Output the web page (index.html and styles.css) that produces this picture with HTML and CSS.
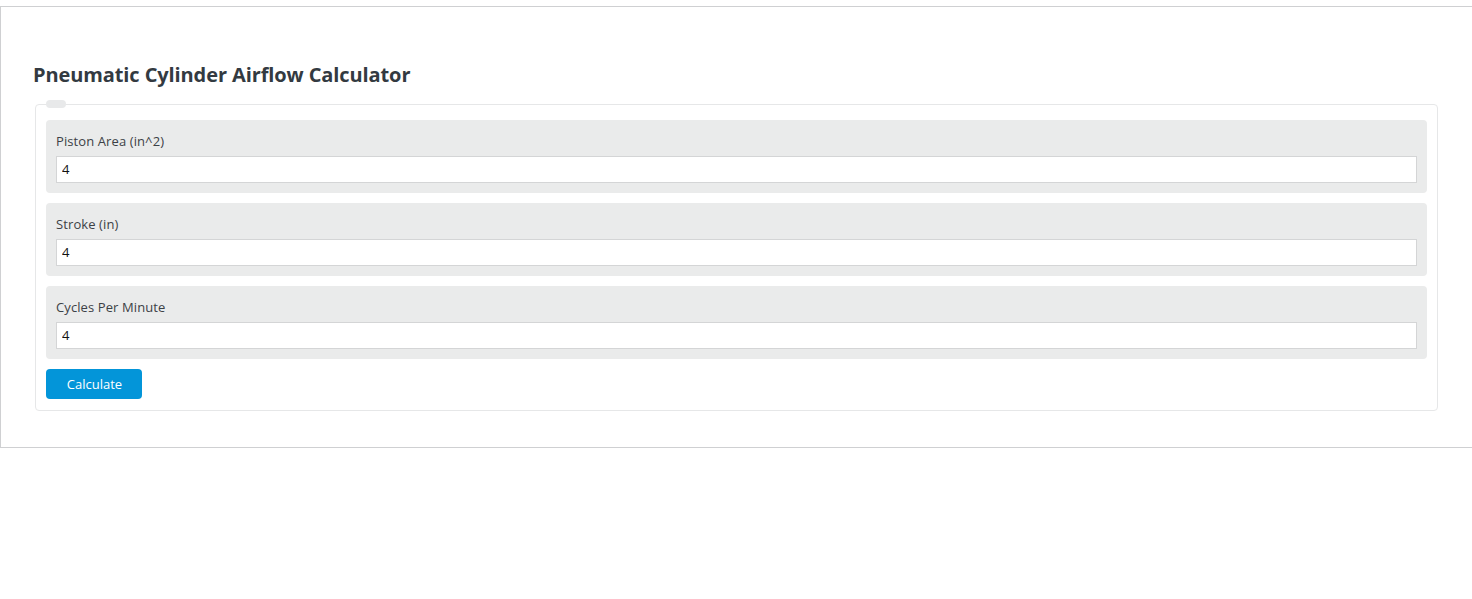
FILE: index.html
```html
<!DOCTYPE html>
<html lang="en">
<head>
<meta charset="utf-8">
<title>Pneumatic Cylinder Airflow Calculator</title>
<link rel="stylesheet" href="styles.css">
</head>
<body>
<div class="page">
  <h2 class="title">Pneumatic Cylinder Airflow Calculator</h2>
  <form class="calc">
    <span class="legend"></span>
    <div class="group">
      <label class="label" for="area">Piston Area (in^2)</label>
      <input class="field" id="area" type="text" value="4">
    </div>
    <div class="group">
      <label class="label" for="stroke">Stroke (in)</label>
      <input class="field" id="stroke" type="text" value="4">
    </div>
    <div class="group">
      <label class="label" for="cpm">Cycles Per Minute</label>
      <input class="field" id="cpm" type="text" value="4">
    </div>
    <div class="actions">
      <button class="btn" type="button">Calculate</button>
    </div>
  </form>
</div>
</body>
</html>
```
FILE: styles.css
```css
html, body {
  margin: 0;
  padding: 0;
  background: #fff;
}
body {
  font-family: "Open Sans", "Noto Sans", sans-serif;
  color: #333;
}
.page {
  margin-top: 6px;
  border: 1px solid #cfd0d2;
  border-right: none;
  padding: 54px 34px 36px 34px;
}
.title {
  margin: 0 0 15px -2px;
  font-size: 20px;
  line-height: 28px;
  font-weight: 700;
  color: #333a41;
  letter-spacing: -0.1px;
}
.calc {
  position: relative;
  border: 1px solid #e6e7e8;
  border-radius: 4px;
  padding: 15px 10px 11px 10px;
  display: flex;
  flex-direction: column;
  gap: 10px;
  margin-top: 4px;
}
.legend {
  position: absolute;
  left: 10px;
  top: -5px;
  width: 20px;
  height: 8px;
  border-radius: 4px;
  background: #e8e9ea;
}
.group {
  background: #eaebeb;
  border-radius: 4px;
  padding: 10px;
  display: flex;
  flex-direction: column;
}
.label {
  font-size: 13px;
  line-height: 22px;
  color: #3c4146;
  margin-bottom: 4px;
  letter-spacing: 0.1px;
}
.field {
  box-sizing: border-box;
  height: 27px;
  width: 100%;
  border: 1px solid #d4d5d6;
  background: #fff;
  padding: 0 5px 1px 5px;
  font-family: "Open Sans", "Noto Sans", sans-serif;
  font-size: 13px;
  color: #111;
  outline: none;
}
.actions {
  display: flex;
}
.btn {
  height: 30px;
  width: 96px;
  border: none;
  border-radius: 4px;
  background: #0395d9;
  color: #fff;
  font-family: "Open Sans", "Noto Sans", sans-serif;
  font-size: 13px;
  padding: 0 0 0 1px;
  cursor: pointer;
}
```
